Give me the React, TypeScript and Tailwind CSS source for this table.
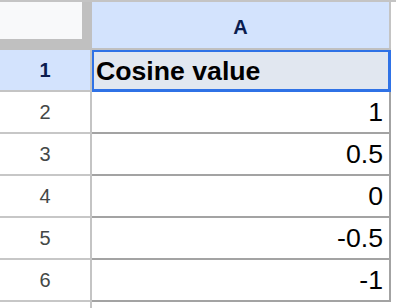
import React from "react";

const rows: { n: number; v: string }[] = [
  { n: 2, v: "1" },
  { n: 3, v: "0.5" },
  { n: 4, v: "0" },
  { n: 5, v: "-0.5" },
  { n: 6, v: "-1" },
];

export default function App() {
  return (
    <div
      className="w-[396px] h-[308px] bg-white overflow-hidden flex flex-col"
      style={{ fontFamily: '"Liberation Sans", Arial, sans-serif' }}
    >
      {/* top line */}
      <div className="h-[2px] w-full bg-[#c4c4c4] shrink-0" />
      {/* header row */}
      <div className="flex h-[48px] shrink-0">
        <div className="w-[92px] h-[48px] bg-[#c0c0c0] shrink-0">
          <div className="w-[82px] h-[37px] bg-[#f8f9fa]" />
        </div>
        <div className="w-[299px] h-[48px] flex flex-col shrink-0">
          <div className="flex h-[46px]">
            <div className="w-[297px] h-full bg-[#d3e3fd] flex items-center justify-center pt-[3px] text-[20px] font-bold text-[#0b1d4f]">
              A
            </div>
            <div className="w-[2px] h-full bg-[#c4c4c4]" />
          </div>
          <div className="h-[2px] bg-[#c0c0c0]" />
        </div>
        <div className="flex-1" />
      </div>
      {/* row 1 */}
      <div className="flex h-[42px] shrink-0">
        <div className="w-[90px] h-full flex flex-col shrink-0">
          <div className="h-[40px] bg-[#d3e3fd] flex items-center justify-center text-[20px] font-bold text-[#0b1d4f]">
            1
          </div>
          <div className="h-[2px] bg-[#c4c4c4]" />
        </div>
        <div className="w-[2px] h-full bg-[#c4c4c4] shrink-0" />
        <div className="w-[299px] h-full bg-[#e1e7f0] border-l-2 border-t-2 border-r-[3px] border-b-[3px] border-[#2f72e6] flex items-center pl-[2px] text-[26.67px] font-bold text-black shrink-0">
          Cosine value
        </div>
        <div className="flex-1" />
      </div>
      {rows.map((r) => (
        <div key={r.n} className="flex h-[42px] shrink-0">
          <div className="w-[90px] h-full flex flex-col shrink-0">
            <div className="h-[40px] bg-white flex items-center justify-center text-[20px] text-[#444746]">
              {r.n}
            </div>
            <div className="h-[2px] bg-[#c7c7c7]" />
          </div>
          <div className="w-[2px] h-full bg-[#c4c4c4] shrink-0" />
          <div className="w-[299px] h-full flex flex-col shrink-0">
            <div className="flex h-[40px]">
              <div className="w-[297px] h-full flex items-center justify-end pr-[6px] text-[26.67px] text-black">
                {r.v}
              </div>
              <div className="w-[2px] h-full bg-[#a3a3a3]" />
            </div>
            <div className="h-[2px] bg-[#a3a3a3]" />
          </div>
          <div className="flex-1" />
        </div>
      ))}
      {/* remaining */}
      <div className="flex flex-1">
        <div className="w-[90px] shrink-0" />
        <div className="w-[2px] bg-[#c4c4c4] shrink-0" />
        <div className="flex-1" />
      </div>
    </div>
  );
}
